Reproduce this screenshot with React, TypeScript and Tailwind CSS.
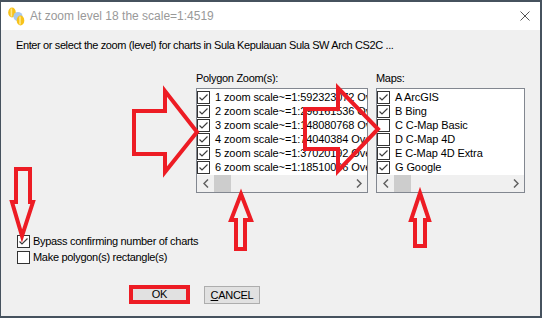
import React from "react";

const RED = "#ed1c24";

function Check({ checked }: { checked: boolean }) {
  return (
    <span className="w-[13px] h-[13px] border border-[#333333] bg-white flex items-center justify-center shrink-0">
      {checked && (
        <svg width="11" height="11" viewBox="0 0 11 11">
          <polyline points="1.5,5.5 4,8 9.5,2.5" fill="none" stroke="#3c3c3c" strokeWidth="1.2" />
        </svg>
      )}
    </span>
  );
}

function HScroll() {
  return (
    <div className="h-[17px] bg-[#f0f0f0] flex items-stretch shrink-0">
      <div className="w-[17px] flex items-center justify-center">
        <svg width="6" height="9" viewBox="0 0 6 9">
          <polyline points="5,0.5 1,4.5 5,8.5" fill="none" stroke="#606060" strokeWidth="1.5" />
        </svg>
      </div>
      <div className="w-[17px] bg-[#cdcdcd]" />
      <div className="flex-1" />
      <div className="w-[17px] flex items-center justify-center">
        <svg width="6" height="9" viewBox="0 0 6 9">
          <polyline points="1,0.5 5,4.5 1,8.5" fill="none" stroke="#606060" strokeWidth="1.5" />
        </svg>
      </div>
    </div>
  );
}

function ListBox({ items, width }: { items: [string, boolean][]; width: string }) {
  return (
    <div className={`${width} h-[105px] border border-[#828790] bg-white flex flex-col overflow-hidden`}>
      <div className="pt-[1px] flex flex-col">
        {items.map(([t, c]) => (
          <div key={t} className="h-[14px] flex items-center whitespace-nowrap overflow-hidden">
            <Check checked={c} />
            <span className="ml-[5px] tracking-[-0.1px]">{t}</span>
          </div>
        ))}
      </div>
      <div className="mt-auto">
        <HScroll />
      </div>
    </div>
  );
}

export default function App() {
  const poly: [string, boolean][] = [
    ["1 zoom scale~=1:592323072 Overview", true],
    ["2 zoom scale~=1:296161536 Overview", true],
    ["3 zoom scale~=1:148080768 Overview", true],
    ["4 zoom scale~=1:74040384 Overview", true],
    ["5 zoom scale~=1:37020192 Overview", true],
    ["6 zoom scale~=1:18510096 Overview", true],
  ];
  const maps: [string, boolean][] = [
    ["A ArcGIS", true],
    ["B Bing", true],
    ["C C-Map Basic", false],
    ["D C-Map 4D", false],
    ["E C-Map 4D Extra", true],
    ["G Google", true],
  ];
  return (
    <div className="relative w-[542px] h-[318px] overflow-hidden font-['Liberation_Sans',Arial,sans-serif] text-[11px] tracking-[-0.3px] text-black leading-[13px]">
      <div className="w-full h-full flex flex-col border-l border-t-2 border-r-2 border-b-2 border-[#46525e] bg-[#f0f0f0]">
        {/* title bar */}
        <div className="h-[28px] bg-white flex items-center shrink-0">
          <svg className="ml-[6px]" width="18" height="19" viewBox="0 0 18 19">
            <ellipse cx="5" cy="5.5" rx="3.8" ry="5" fill="#f7c21a" />
            <rect x="3.6" y="1.5" width="1.6" height="8" fill="#fde68a" />
            <circle cx="11" cy="9.5" r="4.6" fill="#a9c8ee" />
            <ellipse cx="13.5" cy="13.5" rx="3.8" ry="5" fill="#f7c21a" />
            <rect x="12.2" y="9.5" width="1.6" height="8" fill="#fde68a" />
          </svg>
          <span className="ml-[5px] text-[12px] tracking-normal text-[#999999]">
            At zoom level 18 the scale=1:4519
          </span>
          <svg className="ml-auto mr-[10px]" width="10" height="10" viewBox="0 0 10 10">
            <path d="M0.5 0.5 L9.5 9.5 M9.5 0.5 L0.5 9.5" stroke="#555555" strokeWidth="1" />
          </svg>
        </div>
        {/* body */}
        <div className="flex flex-col flex-1">
          <div className="ml-[15px] mt-[9px] whitespace-nowrap tracking-[-0.38px]">
            Enter or select the zoom (level) for charts in Sula Kepulauan Sula SW Arch CS2C ...
          </div>
          <div className="flex ml-[195px] mt-[20px]">
            <div className="flex flex-col">
              <div>Polygon Zoom(s):</div>
              <div className="mt-[3px]">
                <ListBox items={poly} width="w-[172px]" />
              </div>
            </div>
            <div className="flex flex-col ml-[8px]">
              <div>Maps:</div>
              <div className="mt-[3px]">
                <ListBox items={maps} width="w-[149px]" />
              </div>
            </div>
          </div>
          <div className="flex flex-col ml-[16px] mt-[40px]">
            <div className="h-[16px] flex items-center">
              <Check checked={true} />
              <span className="ml-[3px]">Bypass confirming number of charts</span>
            </div>
            <div className="h-[16px] flex items-center">
              <Check checked={false} />
              <span className="ml-[3px]">Make polygon(s) rectangle(s)</span>
            </div>
          </div>
          <div className="flex items-start ml-[128px] mt-[20px]">
            <div className="w-[61px] h-[19px] border-4 border-[#ed1c24] bg-[#e1e1e1] flex items-center justify-center">
              OK
            </div>
            <div className="ml-[14px] mt-[1px] w-[56px] h-[18px] border border-[#adadad] bg-[#e1e1e1] flex items-center justify-center">
              <span className="underline">C</span>ANCEL
            </div>
          </div>
        </div>
      </div>
      {/* red annotation arrows */}
      <svg className="absolute left-0 top-0 pointer-events-none" width="542" height="318" viewBox="0 0 542 318">
        <g fill="none" stroke={RED} strokeWidth="4" strokeLinejoin="miter" strokeMiterlimit="10">
          <polygon points="134,111 165,111 165,91 197,132 165,172 165,154 134,154" />
          <polygon points="305,109 338,109 338,88 378,129 338,171 338,149 305,149" />
          <polygon points="241,194 251,220 245,220 245,249 236,249 236,220 231,220" />
          <polygon points="420,193 429,220 425,220 425,246 415,246 415,220 411,220" />
          <polygon points="16,169 30,169 30,202 33,202 22,236 12,202 16,202" />
        </g>
      </svg>
    </div>
  );
}
